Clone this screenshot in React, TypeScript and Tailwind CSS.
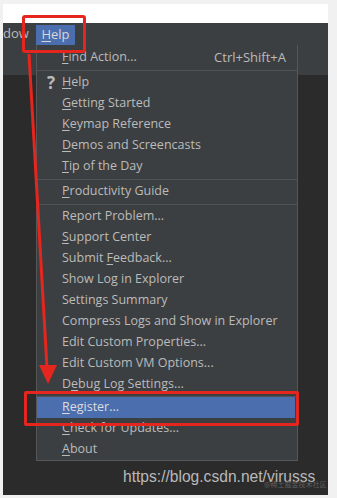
type MenuItem = {
  label: string;
  mn?: number;
  shortcut?: string;
  icon?: string;
  active?: boolean;
};

const groups: MenuItem[][] = [
  [{ label: "Find Action...", mn: 0, shortcut: "Ctrl+Shift+A" }],
  [
    { label: "Help", mn: 0, icon: "?" },
    { label: "Getting Started", mn: 0 },
    { label: "Keymap Reference", mn: 0 },
    { label: "Demos and Screencasts", mn: 0 },
    { label: "Tip of the Day", mn: 0 },
  ],
  [{ label: "Productivity Guide", mn: 0 }],
  [
    { label: "Report Problem..." },
    { label: "Support Center", mn: 0 },
    { label: "Submit Feedback...", mn: 7 },
    { label: "Show Log in Explorer" },
    { label: "Settings Summary" },
    { label: "Compress Logs and Show in Explorer" },
    { label: "Edit Custom Properties..." },
    { label: "Edit Custom VM Options..." },
    { label: "Debug Log Settings...", mn: 1 },
  ],
  [
    { label: "Register...", mn: 0, active: true },
    { label: "Check for Updates...", mn: 0 },
    { label: "About", mn: 0 },
  ],
];

function Label({ text, mn }: { text: string; mn?: number }) {
  if (mn === undefined) return <span>{text}</span>;
  return (
    <span>
      {text.slice(0, mn)}
      <span className="underline underline-offset-2 decoration-1">{text[mn]}</span>
      {text.slice(mn + 1)}
    </span>
  );
}

function Row({ item }: { item: MenuItem }) {
  return (
    <div
      className={`flex h-[21px] items-center whitespace-nowrap pr-[11px] ${
        item.active ? "mr-[2px] bg-[#4b6eaf] text-[#dcdcdc]" : "text-[#bbbbbb]"
      }`}
    >
      <div className="flex w-[25px] justify-center pl-[3px] text-[17px] font-bold leading-none">
        {item.icon}
      </div>
      <div className="flex-1">
        <Label text={item.label} mn={item.mn} />
      </div>
      {item.shortcut && <span className="text-[13px]">{item.shortcut}</span>}
    </div>
  );
}

function HelpMenu() {
  return (
    <div className="w-[262px] h-[416px] border border-t-0 border-[#555759] bg-[#3c3f41] pt-[2px] text-[12.5px] font-['Open_Sans',sans-serif]">
      {groups.map((g, gi) => (
        <div key={gi}>
          {gi > 0 && (
            <div className={`flex items-center ${gi === 4 ? "h-[2px]" : "h-[4px]"}`}>
              <div className="h-px w-full bg-[#515355]" />
            </div>
          )}
          {g.map((item) => (
            <Row key={item.label} item={item} />
          ))}
        </div>
      ))}
    </div>
  );
}

export default function App() {
  return (
    <div className="relative h-[498px] w-[337px] overflow-hidden bg-[#f1f1f1] pl-[3px] pr-[9px] pt-[4px]">
      <div className="h-[19px] bg-white" />
      <div className="flex h-[22px] items-center bg-[#3c3f41] text-[13px] text-[#bbbbbb] font-['Open_Sans',sans-serif]">
        <div className="w-[33px]">dow</div>
        <div className="flex h-[20px] w-[39px] items-center justify-center self-end bg-[#4b6eaf] text-[#d8d8d8]">
          <Label text="Help" mn={0} />
        </div>
      </div>
      <div className="flex h-[450px] flex-col bg-[#2b2b2b]">
        <div className="flex">
          <div className="flex w-[33px] flex-col">
            <div className="h-[30px] bg-[#3c3f41]" />
          </div>
          <HelpMenu />
          <div className="flex flex-1 flex-col">
            <div className="h-[30px] bg-[#3c3f41]" />
          </div>
        </div>
        <div className="relative flex-1 whitespace-nowrap pl-[120px] pt-[6px] text-[15.6px] leading-[20px] text-[#b9b9b9] font-['Liberation_Sans',Arial,sans-serif]">
          https://blog.csdn.net/virusss
          <span className="absolute left-[261px] top-[20px] text-[7px] leading-none text-[#5e5e5e] font-['Noto_Sans_CJK_SC',sans-serif]">
            @稀土掘金技术社区
          </span>
        </div>
      </div>

      {/* annotations */}
      <div className="absolute left-[22px] top-[15px] h-[38px] w-[64px] rounded-[3px] border-[3px] border-[#e4261f]" />
      <div className="absolute left-[24px] top-[391px] h-[35px] w-[275px] rounded-[2px] border-[3px] border-[#e4261f]" />
      <svg className="absolute left-0 top-0" width="337" height="498" viewBox="0 0 337 498">
        <line x1="29" y1="54" x2="47" y2="368" stroke="#e4261f" strokeWidth="3" />
        <polygon points="39,365 57,365 48,384" fill="#e4261f" />
      </svg>
    </div>
  );
}
